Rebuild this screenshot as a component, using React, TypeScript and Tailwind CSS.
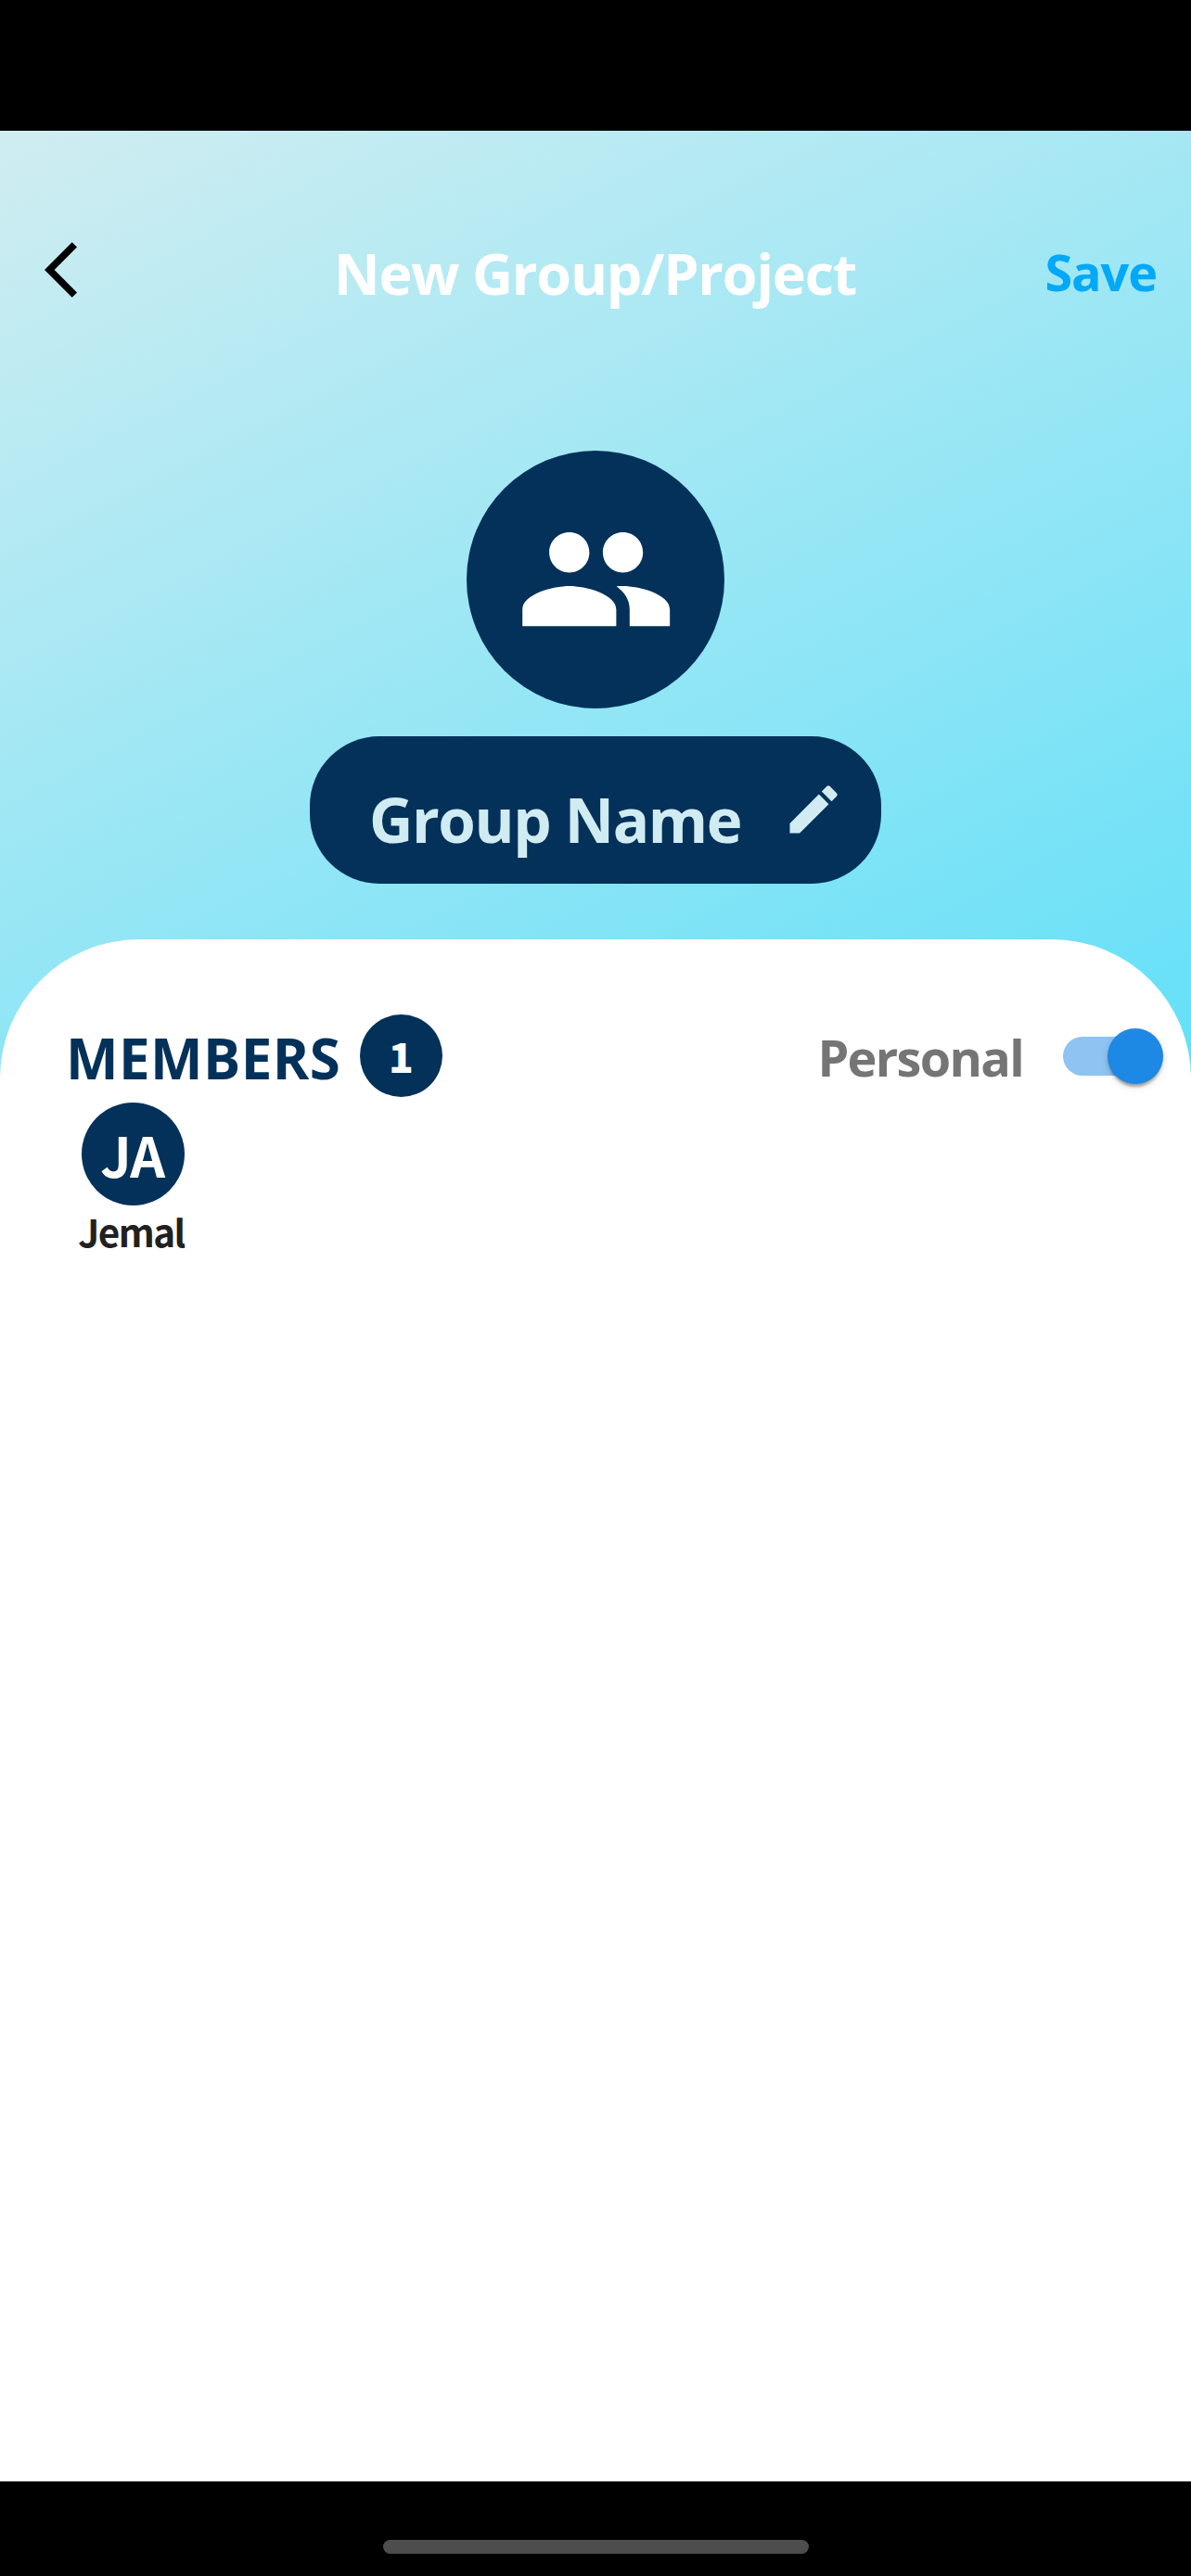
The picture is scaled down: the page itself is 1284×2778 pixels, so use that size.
const members = [{ initials: "JA", name: "Jemal" }];

function BackIcon() {
  return (
    <svg viewBox="0 0 24 24" className="mt-[114px] ml-[48px] h-[72px] w-[72px] shrink-0" fill="#000">
      <path d="M11.67 3.87 9.9 2.1 0 12l9.9 9.9 1.77-1.77L3.54 12z" />
    </svg>
  );
}

function GroupIcon() {
  return (
    <svg viewBox="0 0 24 24" className="ml-px h-[173.4px] w-[173.4px]" fill="#fff">
      <path d="M16 11c1.66 0 2.99-1.34 2.99-3S17.66 5 16 5s-3 1.34-3 3 1.34 3 3 3zm-8 0c1.66 0 2.99-1.34 2.99-3S9.66 5 8 5 5 6.34 5 8s1.34 3 3 3zm0 2c-2.33 0-7 1.17-7 3.5V19h14v-2.5c0-2.33-4.67-3.5-7-3.5zm8 0c-.29 0-.62.02-.97.05 1.16.84 1.97 1.97 1.97 3.45V19h6v-2.5c0-2.33-4.67-3.5-7-3.5z" />
    </svg>
  );
}

function PencilIcon() {
  return (
    <svg viewBox="0 0 24 24" className="mt-[45.5px] mr-[39px] h-[68px] w-[68px] shrink-0" fill="#d0ecf2">
      <path d="M3 17.25V21h3.75L17.81 9.94l-3.75-3.75L3 17.25zM20.71 7.04a1 1 0 0 0 0-1.41l-2.34-2.34a1 1 0 0 0-1.41 0l-1.83 1.83 3.75 3.75 1.83-1.83z" />
    </svg>
  );
}

function Toggle() {
  return (
    <button
      role="switch"
      aria-checked="true"
      aria-label="Personal"
      className="mt-[105px] mr-[30px] flex h-[42px] w-[108px] shrink-0 items-center rounded-full bg-[#8ec3f2]"
    >
      <span className="ml-auto h-[60px] w-[60px] shrink-0 rounded-full bg-[#1e88e5] shadow-[0_6px_3px_-3px_rgba(0,0,0,0.2),0_3px_3px_rgba(0,0,0,0.14),0_3px_9px_rgba(0,0,0,0.12)]" />
    </button>
  );
}

export default function App() {
  return (
    <div className="flex h-[2778px] w-[1284px] flex-col overflow-hidden bg-black font-['Open_Sans','Noto_Sans',sans-serif] font-bold whitespace-nowrap">
      <div className="h-[141px] shrink-0" />
      <main className="flex h-[2535px] shrink-0 flex-col bg-[linear-gradient(153.14deg,#d0edf1,#00d4ff)]">
        <header className="flex h-[345px] shrink-0 items-start">
          <BackIcon />
          <h1 className="mt-[113.5px] ml-[240px] w-[564px] text-[61px] leading-[80px] tracking-[-1.2px] text-white">New Group/Project</h1>
          <button className="mt-[112px] ml-auto mr-[37px] text-[54px] leading-[80px] tracking-[-1.1px] text-[#03a9f6]">Save</button>
        </header>

        <section className="flex flex-col items-center">
          <div className="flex h-[278px] w-[278px] items-center justify-center rounded-full bg-[#033159]">
            <GroupIcon />
          </div>
          <div className="mt-[29.6px] flex h-[159.1px] w-[616px] items-start justify-between rounded-[75px] bg-[#033159]">
            <span className="mt-[50px] ml-[64px] text-[65.5px] leading-[80px] tracking-[-1.4px] text-[#d0ecf2]">Group Name</span>
            <PencilIcon />
          </div>
        </section>

        <section className="mt-[60.3px] flex grow flex-col rounded-t-[150px] bg-white">
          <div className="flex h-[176px] shrink-0 items-start">
            <h2 className="mt-[88px] ml-[71px] w-[317px] text-[60px] leading-[80px] tracking-[0.4px] text-[#033159]">MEMBERS</h2>
            <span className="mt-[81px] flex h-[89px] w-[89px] shrink-0 items-center justify-center rounded-full bg-[#033159] font-['Noto_Sans_CJK_SC',sans-serif] text-[44px] leading-none font-black text-white">
              1
            </span>
            <span className="mt-[87px] ml-auto mr-[43px] text-[54px] leading-[80px] tracking-[-1.7px] text-[#757575]">Personal</span>
            <Toggle />
          </div>
          <ul className="flex pl-[73px]">
            {members.map((m) => (
              <li key={m.name} className="flex w-[141px] flex-col items-center font-['Noto_Sans_CJK_SC',sans-serif]">
                <span className="flex h-[111px] w-[111px] items-center justify-center rounded-full bg-[#033159] pr-0.5 text-[59px] leading-none tracking-[-1.5px] text-white">
                  {m.initials}
                </span>
                <span className="-mt-0.5 mr-1 text-[40.5px] leading-[60px] tracking-[-1.6px] text-[#212121]">{m.name}</span>
              </li>
            ))}
          </ul>
        </section>
      </main>
      <footer className="flex grow items-start justify-center pt-[63px]">
        <div className="h-[15px] w-[459px] rounded-full bg-[#4d4d4d]" />
      </footer>
    </div>
  );
}
